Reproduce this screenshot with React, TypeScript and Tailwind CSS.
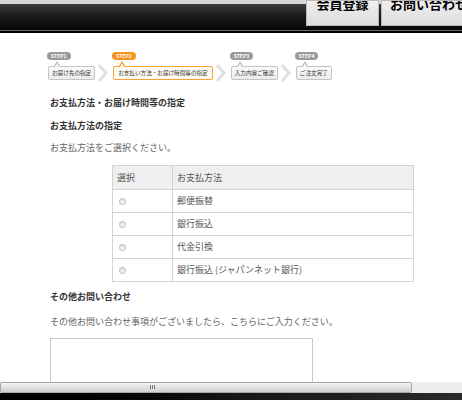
const font = { fontFamily: '"Noto Sans CJK JP", "Liberation Sans", sans-serif' }

const steps = [
  { no: 'STEP1', label: 'お届け先の指定', active: false },
  { no: 'STEP2', label: 'お支払い方法・お届け時間等の指定', active: true },
  { no: 'STEP3', label: '入力内容ご確認', active: false },
  { no: 'STEP4', label: 'ご注文完了', active: false },
]

const methods = ['郵便振替', '銀行振込', '代金引換', '銀行振込 (ジャパンネット銀行)']

function Chevron() {
  return (
    <svg width="10" height="18" viewBox="0 0 10 18" className="ml-[3px] mr-[5px] mt-[12px] shrink-0">
      <polyline points="1,1 8,9 1,17" fill="none" stroke="#e0e0e0" strokeWidth="3" />
    </svg>
  )
}

function Step({ no, label, active }: { no: string; label: string; active: boolean }) {
  return (
    <div className="flex flex-col items-start">
      <span
        className={`ml-[-1px] rounded-full px-[4px] h-[8px] leading-[8px] text-[5px] font-bold text-white ${
          active ? 'bg-[#f7941d]' : 'bg-[#9a9a9a]'
        }`}
      >
        {no}
      </span>
      <div className="relative mt-[6px]">
        <span
          className={`absolute left-[6px] top-[-5px] w-0 h-0 border-x-[3px] border-x-transparent border-b-[5px] ${
            active ? 'border-b-[#f7941d]' : 'border-b-[#bbb]'
          }`}
        />
        <span
          className={`absolute left-[7px] top-[-3px] w-0 h-0 border-x-[2px] border-x-transparent border-b-[4px] ${
            active ? 'border-b-[#fffaf2]' : 'border-b-[#f6f6f6]'
          }`}
        />
        <div
          className={`h-[14px] px-[3px] flex items-center rounded-[2px] border text-[5.6px] text-[#333] whitespace-nowrap ${
            active ? 'border-[#f7a23a] bg-[#fffaf2] px-[4px]' : 'border-[#c4c4c4] bg-gradient-to-b from-[#fafafa] to-[#ececec]'
          }`}
        >
          {label}
        </div>
      </div>
    </div>
  )
}

export default function App() {
  return (
    <div className="w-[462px] h-[400px] overflow-hidden flex flex-col bg-white" style={font}>
      {/* ヘッダー */}
      <div className="h-[33px] shrink-0 relative bg-gradient-to-b from-[#4a4a4a] via-[#1c1c1c] to-[#050505] border-b-[2px] border-b-black">
        <div className="h-[4px] bg-[#d8d8d8]" />
        <div className="absolute left-0 right-0 bottom-0 h-[1px] bg-[#6a6a6a]" />
        <div className="absolute top-0 right-0 flex gap-[2px] h-[26px]">
          <div className="w-[73px] bg-gradient-to-b from-[#f0f0f0] to-[#dcdcdc] border border-[#bbb] overflow-hidden flex justify-center">
            <span className="text-[13px] font-bold text-black leading-none mt-[-4px]">会員登録</span>
          </div>
          <div className="w-[81px] bg-gradient-to-b from-[#f0f0f0] to-[#dcdcdc] border border-[#bbb] border-r-0 overflow-hidden pl-[8px]">
            <span className="text-[13px] font-bold text-black leading-none mt-[-4px] block whitespace-nowrap">お問い合わせ</span>
          </div>
        </div>
      </div>

      {/* 本文 */}
      <div className="flex-1 overflow-hidden pl-[48px]">
        <div className="flex items-start pt-[19px]">
          {steps.map((s, i) => (
            <div key={s.no} className="flex items-start">
              <Step {...s} />
              {i < steps.length - 1 && <Chevron />}
            </div>
          ))}
        </div>

        <h2 className="mt-[15px] ml-[2px] text-[9px] font-bold text-[#333] leading-[12px]">お支払方法・お届け時間等の指定</h2>
        <h3 className="mt-[11px] ml-[2px] text-[9px] font-bold text-[#333] leading-[12px]">お支払方法の指定</h3>
        <p className="mt-[10px] ml-[2px] text-[9px] text-[#666] leading-[12px]">お支払方法をご選択ください。</p>

        <table className="mt-[11px] ml-[64px] w-[302px] border-collapse text-[9px] text-[#555]">
          <thead>
            <tr className="bg-[#efefef] h-[24px]">
              <th className="border border-[#d4d4d4] w-[60px] text-left font-normal pl-[4px]">選択</th>
              <th className="border border-[#d4d4d4] text-left font-normal pl-[4px]">お支払方法</th>
            </tr>
          </thead>
          <tbody>
            {methods.map((m) => (
              <tr key={m} className="h-[23px]">
                <td className="border border-[#d4d4d4] pl-[6px]">
                  <span className="block w-[7px] h-[7px] rounded-full border border-[#b8b8b8] bg-gradient-to-b from-[#e0e0e0] to-[#fafafa]" />
                </td>
                <td className="border border-[#d4d4d4] pl-[4px]">{m}</td>
              </tr>
            ))}
          </tbody>
        </table>

        <h3 className="mt-[9px] ml-[2px] text-[9px] font-bold text-[#333] leading-[12px]">その他お問い合わせ</h3>
        <p className="mt-[13px] ml-[2px] text-[9px] text-[#666] leading-[12px]">
          その他お問い合わせ事項がございましたら、こちらにご入力ください。
        </p>
        <div className="mt-[10px] ml-[2px] w-[263px] h-[60px] border border-[#c8c8c8]" />
      </div>

      {/* スクロールバー */}
      <div className="h-[11px] shrink-0 flex bg-[#ececec]">
        <div className="w-[412px] border border-[#a8a8a8] rounded-[2px] bg-gradient-to-b from-[#f4f4f4] via-[#e2e2e2] to-[#cfcfcf] relative">
          <div className="absolute left-[149px] top-[2px] flex gap-[1px]">
            <span className="w-[1px] h-[4px] bg-[#777]" />
            <span className="w-[1px] h-[4px] bg-[#777]" />
            <span className="w-[1px] h-[4px] bg-[#777]" />
          </div>
        </div>
      </div>
      <div className="h-[7px] shrink-0 bg-gradient-to-r from-black via-[#151515] to-[#2a2a2a]" />
    </div>
  )
}
